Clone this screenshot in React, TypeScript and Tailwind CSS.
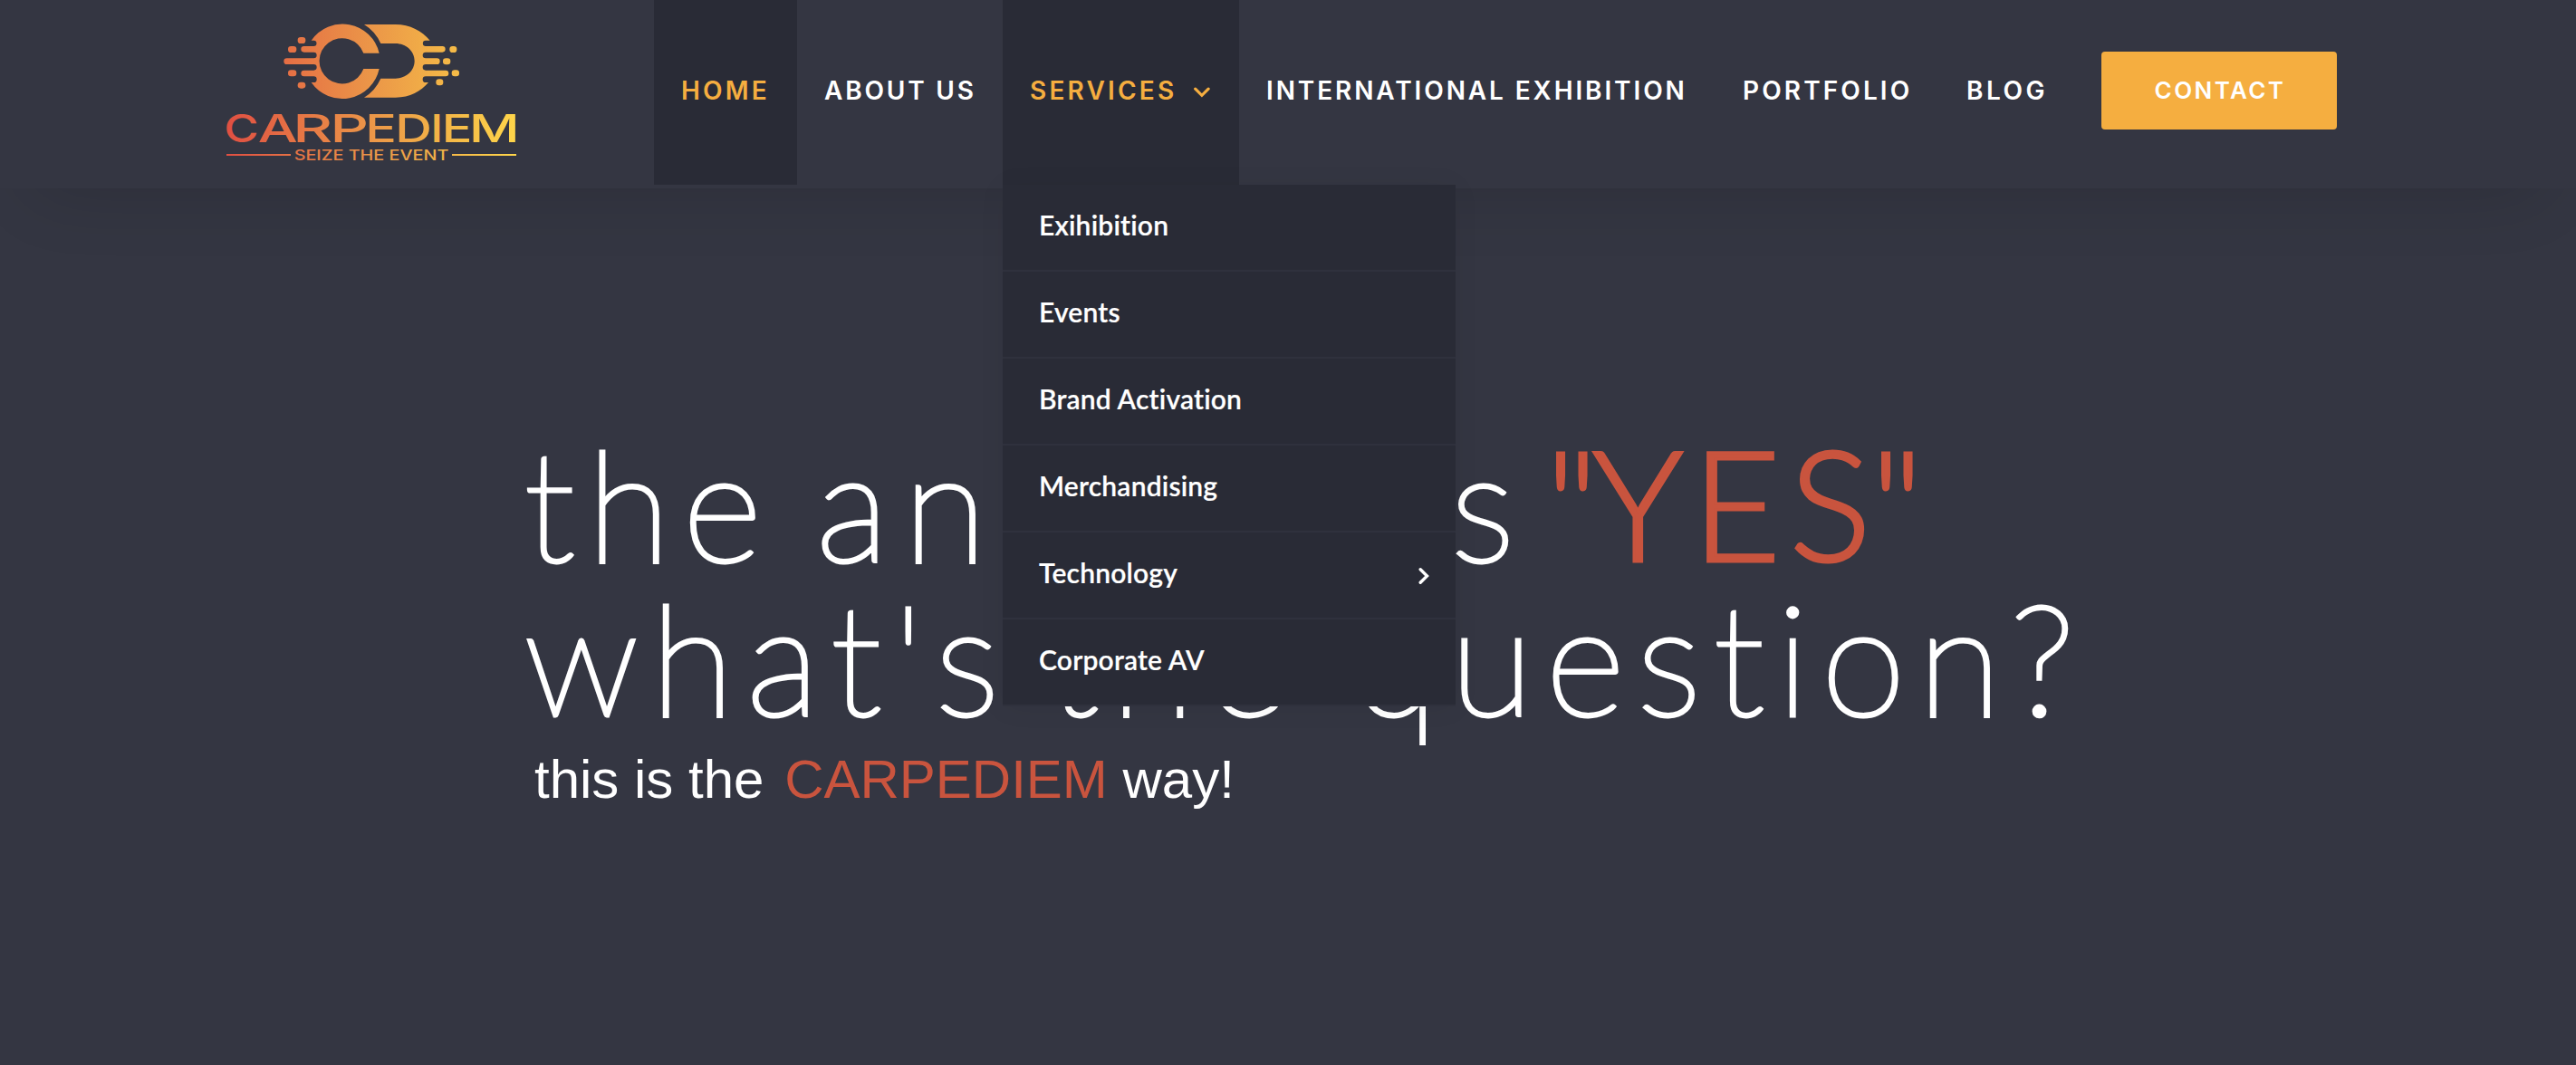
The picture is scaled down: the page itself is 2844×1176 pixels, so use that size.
import React from 'react';
import { clsx } from 'clsx';

interface NavItem {
  label: string;
  className: string;
  active?: boolean;
  hasMenu?: boolean;
}

const navItems: NavItem[] = [
  { label: 'HOME', className: 'w-[158px] tracking-[3.2px]', active: true },
  { label: 'ABOUT US', className: 'w-[227px] tracking-[2.8px]' },
  { label: 'SERVICES', className: 'w-[261px] tracking-[3.2px]', active: true, hasMenu: true },
  { label: 'INTERNATIONAL EXHIBITION', className: 'w-[526px] tracking-[2.9px]' },
  { label: 'PORTFOLIO', className: 'w-[247px] tracking-[3.1px]' },
  { label: 'BLOG', className: 'w-[149px] tracking-[3.5px]' },
];

const services = [
  { label: 'Exihibition' },
  { label: 'Events' },
  { label: 'Brand Activation' },
  { label: 'Merchandising' },
  { label: 'Technology', hasChildren: true },
  { label: 'Corporate AV' },
];

// Each letter of the wordmark is stretched to its own width
const wordmark = [
  { char: 'C', x: 52, width: 115 },
  { char: 'A', x: 164, width: 132 },
  { char: 'R', x: 280, width: 132 },
  { char: 'P', x: 403.5, width: 127.5 },
  { char: 'E', x: 519.5, width: 104 },
  { char: 'D', x: 619, width: 122 },
  { char: 'I', x: 736, width: 42 },
  { char: 'E', x: 773, width: 101 },
  { char: 'M', x: 863, width: 168 },
];

const Logo: React.FC = () => (
  <svg width="320" height="156" viewBox="60 42 960 468" fill="url(#logo-gradient)" className="shrink-0 overflow-visible">
    <defs>
      <linearGradient id="logo-gradient" gradientUnits="userSpaceOnUse" x1="60" y1="0" x2="1020" y2="0">
        <stop offset="0" stopColor="#e04f42" />
        <stop offset="0.25" stopColor="#e67545" />
        <stop offset="0.5" stopColor="#eb9648" />
        <stop offset="0.75" stopColor="#f3b547" />
        <stop offset="1" stopColor="#ffd64a" />
      </linearGradient>
    </defs>

    {/* C */}
    <path d="M341 104h8a9.5 9.5 0 0 1 0 19h-32a10 10 0 0 0 0 20h32a10 10 0 0 1 0 20H260a10 10 0 0 0 0 20h89a10 10 0 0 1 0 20h-32a10 10 0 0 0 0 20h32a10 10 0 0 1 0 20h-8A125 125 0 0 0 566 198H514A75.500 75.500 0 1 1 514 146H566A125 125 0 0 0 341 104Z" />
    <rect x="296" y="93" width="26" height="21" rx="10" />
    <rect x="264" y="123" width="28" height="21" rx="10" />
    <rect x="264" y="202" width="28" height="21" rx="10" />
    <rect x="296" y="242" width="26" height="21" rx="10" />

    {/* D */}
    <path d="M516 51H620C668 51 708 73 734 104H720a9.500 9.500 0 0 0 0 19h55a10 10 0 0 1 0 20h-55a10 10 0 0 0 0 20h37a10 10 0 0 1 0 20h-37a10 10 0 0 0 0 20h66a10 10 0 0 1 0 20h-66a10 10 0 0 0 0 20h9C704 272 668 293 620 293H516A141 141 0 0 0 571 230H620C655 230 683 205 683 172S655 114 620 114H571A141 141 0 0 0 516 51Z" />
    <rect x="799" y="123" width="24" height="21" rx="10" />
    <rect x="777" y="163" width="25" height="21" rx="10" />
    <rect x="806" y="202" width="25" height="21" rx="10" />
    <rect x="754" y="232" width="24" height="21" rx="10" />

    <text y="440" className="font-['Inter',sans-serif] text-[127px] font-medium">
      {wordmark.map(({ char, x, width }) => (
        <tspan key={x} x={x} textLength={width} lengthAdjust="spacingAndGlyphs">{char}</tspan>
      ))}
    </text>
    <rect x="60" y="480" width="213" height="6" />
    <text x="284" y="500" textLength="512" lengthAdjust="spacingAndGlyphs" className="font-['Inter',sans-serif] text-[48px] font-medium">
      SEIZE THE EVENT
    </text>
    <rect x="807" y="480" width="213" height="6" />
  </svg>
);

const ServicesMenu: React.FC = () => (
  <ul className="absolute left-0 top-full w-[500px] bg-[#292b36] shadow-[0_2px_29px_rgba(0,0,0,0.05)]">
    {services.map(item => (
      <li
        key={item.label}
        className="flex h-24 items-center justify-between border-b-2 border-[#2f313d] pb-[6px] pl-10 pr-[29px] text-white"
      >
        <span className="font-['Lato',sans-serif] text-[30px] leading-[36px] tracking-[0.2px] [-webkit-text-stroke:0.2px_white]">
          {item.label}
        </span>
        {item.hasChildren && (
          <svg width="12" height="20" viewBox="0 0 12 20" fill="none" stroke="currentColor" strokeWidth="3.4" strokeLinecap="round" className="mt-[8px]">
            <path d="M2.200 2.700 9.500 10 2.200 17.300" />
          </svg>
        )}
      </li>
    ))}
  </ul>
);

const Header: React.FC = () => (
  <header className="relative z-10 flex h-[208px] items-start bg-[#343642] pl-[250px] shadow-[0_40px_80px_-40px_rgba(0,0,0,0.16)]">
    <div className="pt-6">
      <Logo />
    </div>

    <nav className="ml-[152px] flex font-['Inter',sans-serif] text-[28px] font-semibold leading-none">
      {navItems.map(item => (
        <div
          key={item.label}
          className={clsx(
            'relative flex h-[204px] items-start whitespace-nowrap pl-[30px] pt-[86px]',
            item.active ? 'bg-[#292b36] text-[#f5ae40]' : 'text-white',
            item.className
          )}
        >
          <span>{item.label}</span>
          {item.hasMenu && (
            <>
              <svg width="18" height="12" viewBox="0 0 18 12" fill="none" stroke="currentColor" strokeWidth="3.2" strokeLinecap="round" className="ml-auto mr-[32px] mt-2.5">
                <path d="M1.700 2.200 8.900 9.300 16.100 2.200" />
              </svg>
              <ServicesMenu />
            </>
          )}
        </div>
      ))}
    </nav>

    <button className="ml-[30px] mt-[57px] h-[86px] w-[260px] rounded-[4px] bg-[#f5ae40] pb-[2px] pl-[2px] font-['Inter',sans-serif] text-[26px] font-semibold tracking-[2.4px] text-white">
      CONTACT
    </button>
  </header>
);

const Hero: React.FC = () => (
  <section className="h-[968px] pl-[579px] pt-[262px] text-white">
    <h1 className="whitespace-nowrap font-['Lato',sans-serif] text-[168px] font-thin leading-[170px] tracking-[14.3px] [word-spacing:-16px] [-webkit-text-stroke:4.8px_white]">
      <div className="flex items-baseline">
        <span>
          the <span className="tracking-[17px]">answer</span> <span className="ml-[-7px]">is</span>
        </span>
        <span className="ml-[20px] text-[169px] font-light text-[#c9543e] [-webkit-text-stroke:3px_#c9543e]">
          <span className="tracking-[-6px]">"</span>
          <span className="tracking-[9.5px]">YES</span>
          <span className="ml-[-10px] tracking-normal">"</span>
        </span>
      </div>
      <div className="[word-spacing:-22px]">
        what's the <span className="ml-[22px]">question?</span>
      </div>
    </h1>
    <p className="ml-[11px] mt-[17px] font-['Liberation_Sans',sans-serif] text-[60px] leading-[68px]">
      this is the <span className="ml-[6px] text-[#c9543e]">CARPEDIEM</span> way!
    </p>
  </section>
);

export default function App() {
  return (
    <div className="h-[1176px] w-[2844px] overflow-hidden bg-[#343642]">
      <Header />
      <Hero />
    </div>
  );
}
